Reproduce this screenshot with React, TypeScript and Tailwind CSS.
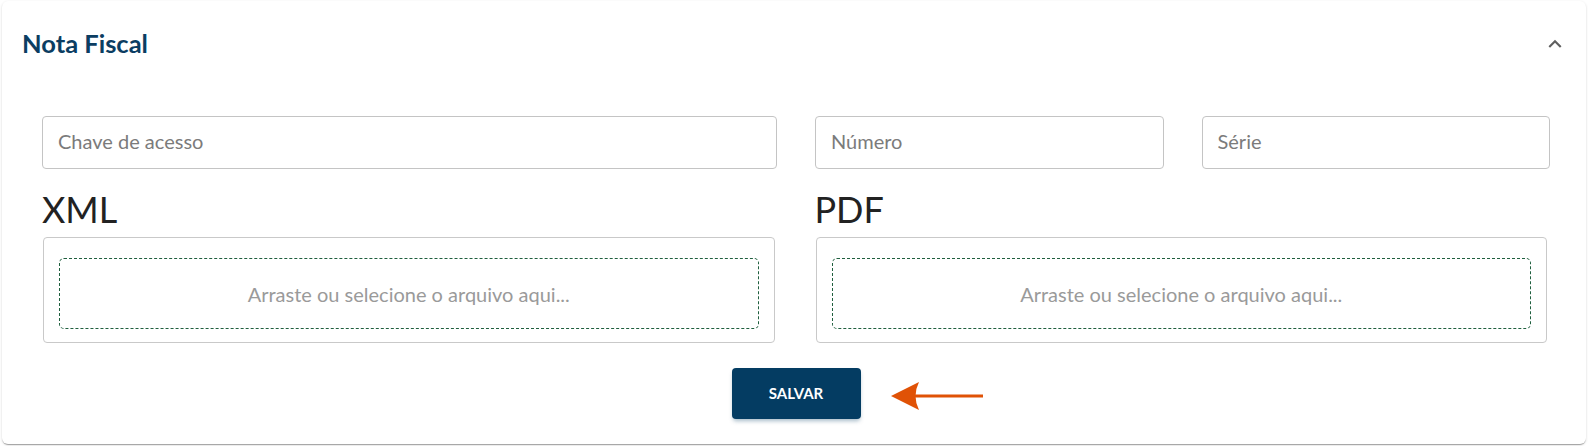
import React from 'react';

const inputBase =
  'h-[53px] w-full rounded-[4px] border border-[#c4c4c4] bg-white pl-[15px] pb-[3px] text-[20px] text-[#333] outline-none placeholder:text-[#7b7b7b]';

const ExpandLess = () => (
  <svg viewBox="0 0 24 24" className="h-[26px] w-[26px] fill-[#5f5f5f]">
    <path d="M12 8l-6 6 1.41 1.41L12 10.83l4.59 4.58L18 14z" />
  </svg>
);

const PointerArrow = () => (
  <svg viewBox="0 0 92 30" className="h-[30px] w-[92px]">
    <path d="M0 15 L28 1 Q21 15 28 29 Z" fill="#e05206" />
    <rect x="22" y="13.5" width="70" height="3" fill="#e05206" />
  </svg>
);

const DropZone = ({ label }: { label: string }) => (
  <div className="flex flex-col">
    <h3 className="mt-[18px] text-[36px] leading-[44px] font-normal text-[#222]">{label}</h3>
    <div className="mt-[6px] ml-[1px] rounded-[4px] border border-[#c9c9c9] px-[15px] pt-[20px] pb-[13px]">
      <div className="flex h-[71px] items-center justify-center rounded-[5px] border border-dashed border-[#1f5f3e] text-[20px] text-[#9a9a9a]">
        Arraste ou selecione o arquivo aqui...
      </div>
    </div>
  </div>
);

export default function App() {
  return (
    <div className="min-h-screen bg-white px-[2px] pt-[1px] [font-family:Lato,'Open_Sans',sans-serif]">
      <div className="rounded-[6px] bg-white shadow-[0_2px_1px_-1px_rgba(0,0,0,0.2),0_1px_1px_0_rgba(0,0,0,0.14),0_1px_3px_0_rgba(0,0,0,0.12)]">
        {/* header */}
        <div className="flex h-[85px] items-center justify-between pl-[20px] pr-[18px]">
          <h2 className="text-[25.5px] font-bold text-[#0b3d62]">Nota Fiscal</h2>
          <button className="flex items-center justify-center">
            <ExpandLess />
          </button>
        </div>

        {/* body */}
        <div className="pl-[40px] pr-[36px] pt-[30px] pb-[25px]">
          <div className="grid grid-cols-12 gap-x-[38px]">
            <div className="col-span-6">
              <input className={inputBase} placeholder="Chave de acesso" />
            </div>
            <div className="col-span-3">
              <input className={inputBase} placeholder="Número" />
            </div>
            <div className="col-span-3">
              <input className={inputBase} placeholder="Série" />
            </div>
          </div>

          <div className="mr-[3px] grid grid-cols-2 gap-x-[40px]">
            <DropZone label="XML" />
            <DropZone label="PDF" />
          </div>

          <div className="mt-[25px] flex justify-center">
            <div className="relative">
              <button className="h-[51px] w-[129px] rounded-[4px] bg-[#043c62] text-[15px] font-bold text-white shadow-[0_3px_4px_-1px_rgba(4,60,98,0.35)]">
                SALVAR
              </button>
              <div className="absolute top-[13px] left-[159px]">
                <PointerArrow />
              </div>
            </div>
          </div>
        </div>
      </div>
    </div>
  );
}
